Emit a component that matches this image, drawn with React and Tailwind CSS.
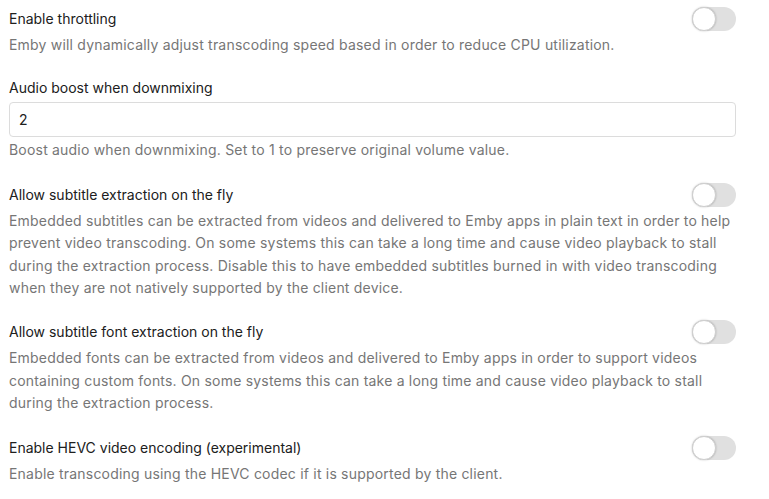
import React, { useState } from "react";

function Toggle({ on, onChange }) {
  return (
    <button
      type="button"
      onClick={() => onChange(!on)}
      className={`flex items-center w-[44px] h-[24px] rounded-full shrink-0 ${
        on ? "bg-[#52b54b]" : "bg-[#e0e0e0]"
      }`}
    >
      <span
        className={`block w-[24px] h-[24px] rounded-full bg-white border border-[#cfcfcf] shadow-[0_0_2px_rgba(0,0,0,0.25)] ${
          on ? "ml-[20px]" : "ml-0"
        }`}
      />
    </button>
  );
}

function Description({ children }) {
  return (
    <p className="text-[14px] leading-[22.4px] tracking-[0.2px] text-[#767676]">
      {children}
    </p>
  );
}

function ToggleSetting({ title, description }) {
  const [on, setOn] = useState(false);
  return (
    <div className="flex flex-col gap-[3px]">
      <div className="flex items-center justify-between h-[24px]">
        <span className="text-[14px] leading-[22px] text-[#202020]">{title}</span>
        <Toggle on={on} onChange={setOn} />
      </div>
      <Description>{description}</Description>
    </div>
  );
}

export default function App() {
  const [boost, setBoost] = useState("2");

  return (
    <div className="bg-white min-h-screen pt-[7px] pl-[9px] pr-[33px] font-['Inter','Noto_Sans',sans-serif]">
      <div className="flex flex-col gap-[21px]">
        <ToggleSetting
          title="Enable throttling"
          description="Emby will dynamically adjust transcoding speed based in order to reduce CPU utilization."
        />

        <div className="flex flex-col">
          <label className="text-[14px] leading-[22px] text-[#202020]">
            Audio boost when downmixing
          </label>
          <input
            value={boost}
            onChange={(e) => setBoost(e.target.value)}
            className="mt-[3px] mb-[2px] h-[35px] w-full rounded-[4px] border border-[#dcdcdc] px-[9px] text-[14px] text-[#202020] outline-none"
          />
          <Description>
            Boost audio when downmixing. Set to 1 to preserve original volume value.
          </Description>
        </div>

        <ToggleSetting
          title="Allow subtitle extraction on the fly"
          description="Embedded subtitles can be extracted from videos and delivered to Emby apps in plain text in order to help prevent video transcoding. On some systems this can take a long time and cause video playback to stall during the extraction process. Disable this to have embedded subtitles burned in with video transcoding when they are not natively supported by the client device."
        />

        <ToggleSetting
          title="Allow subtitle font extraction on the fly"
          description="Embedded fonts can be extracted from videos and delivered to Emby apps in order to support videos containing custom fonts. On some systems this can take a long time and cause video playback to stall during the extraction process."
        />

        <ToggleSetting
          title="Enable HEVC video encoding (experimental)"
          description="Enable transcoding using the HEVC codec if it is supported by the client."
        />
      </div>
    </div>
  );
}
